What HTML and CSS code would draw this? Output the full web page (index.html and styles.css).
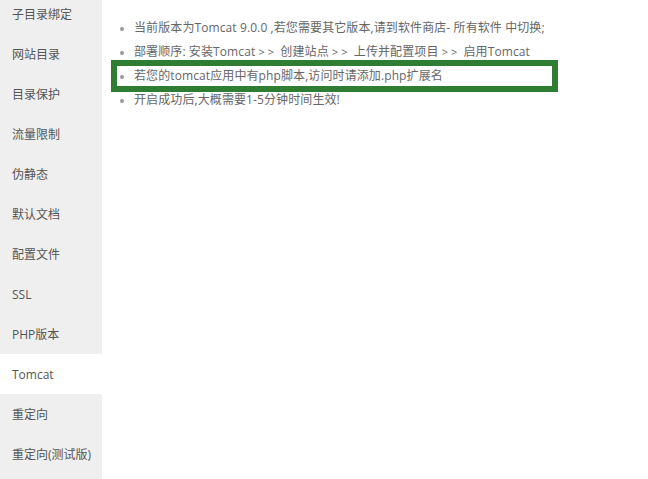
FILE: index.html
```html
<!DOCTYPE html>
<html lang="zh-CN">
<head>
<meta charset="utf-8">
<title>Tomcat</title>
<link rel="stylesheet" href="styles.css">
</head>
<body>
<div class="page">
  <nav class="side">
    <div class="side-list">
      <div class="item">子目录绑定</div>
      <div class="item">网站目录</div>
      <div class="item">目录保护</div>
      <div class="item">流量限制</div>
      <div class="item">伪静态</div>
      <div class="item">默认文档</div>
      <div class="item">配置文件</div>
      <div class="item">SSL</div>
      <div class="item">PHP版本</div>
      <div class="item active">Tomcat</div>
      <div class="item">重定向</div>
      <div class="item">重定向(测试版)</div>
    </div>
  </nav>
  <main class="main">
    <ul class="tips">
      <li>当前版本为Tomcat 9.0.0 ,若您需要其它版本,请到软件商店- 所有软件 中切换;</li>
      <li>部署顺序: 安装Tomcat <span class="arr">&gt;&gt;</span> 创建站点 <span class="arr">&gt;&gt;</span> 上传并配置项目 <span class="arr">&gt;&gt;</span> 启用Tomcat</li>
      <li class="marked">若您的tomcat应用中有php脚本,访问时请添加.php扩展名<span class="highlight"></span></li>
      <li>开启成功后,大概需要1-5分钟时间生效!</li>
    </ul>
  </main>
</div>
</body>
</html>
```

FILE: styles.css
```css
html, body {
  margin: 0;
  padding: 0;
  background: #fff;
}
body {
  font-family: "Open Sans", "Noto Sans CJK SC", sans-serif;
  font-size: 12px;
  color: #666;
  overflow: hidden;
}
.page {
  display: flex;
  height: 479px;
}
.side {
  width: 102px;
  flex: none;
  background: #efefef;
  overflow: hidden;
}
.side-list {
  margin-top: -6px;
}
.item {
  height: 40px;
  line-height: 42px;
  padding-left: 12px;
  color: #555;
  white-space: nowrap;
}
.item.active {
  background: #fff;
}
.main {
  flex: 1;
  position: relative;
}
.tips {
  margin: 16px 0 0 0;
  padding-left: 32px;
  list-style: disc;
}
.tips li {
  line-height: 24px;
  color: #666;
  letter-spacing: 0.1px;
}
.tips li::marker {
  color: #999;
  font-size: 10px;
}
.arr {
  letter-spacing: 3px;
  font-size: 11px;
}
.marked {
  position: relative;
}
.highlight {
  position: absolute;
  left: -23px;
  top: -4px;
  width: 447px;
  height: 32px;
  box-sizing: border-box;
  border: 6px solid #2e7d32;
  pointer-events: none;
}
```
